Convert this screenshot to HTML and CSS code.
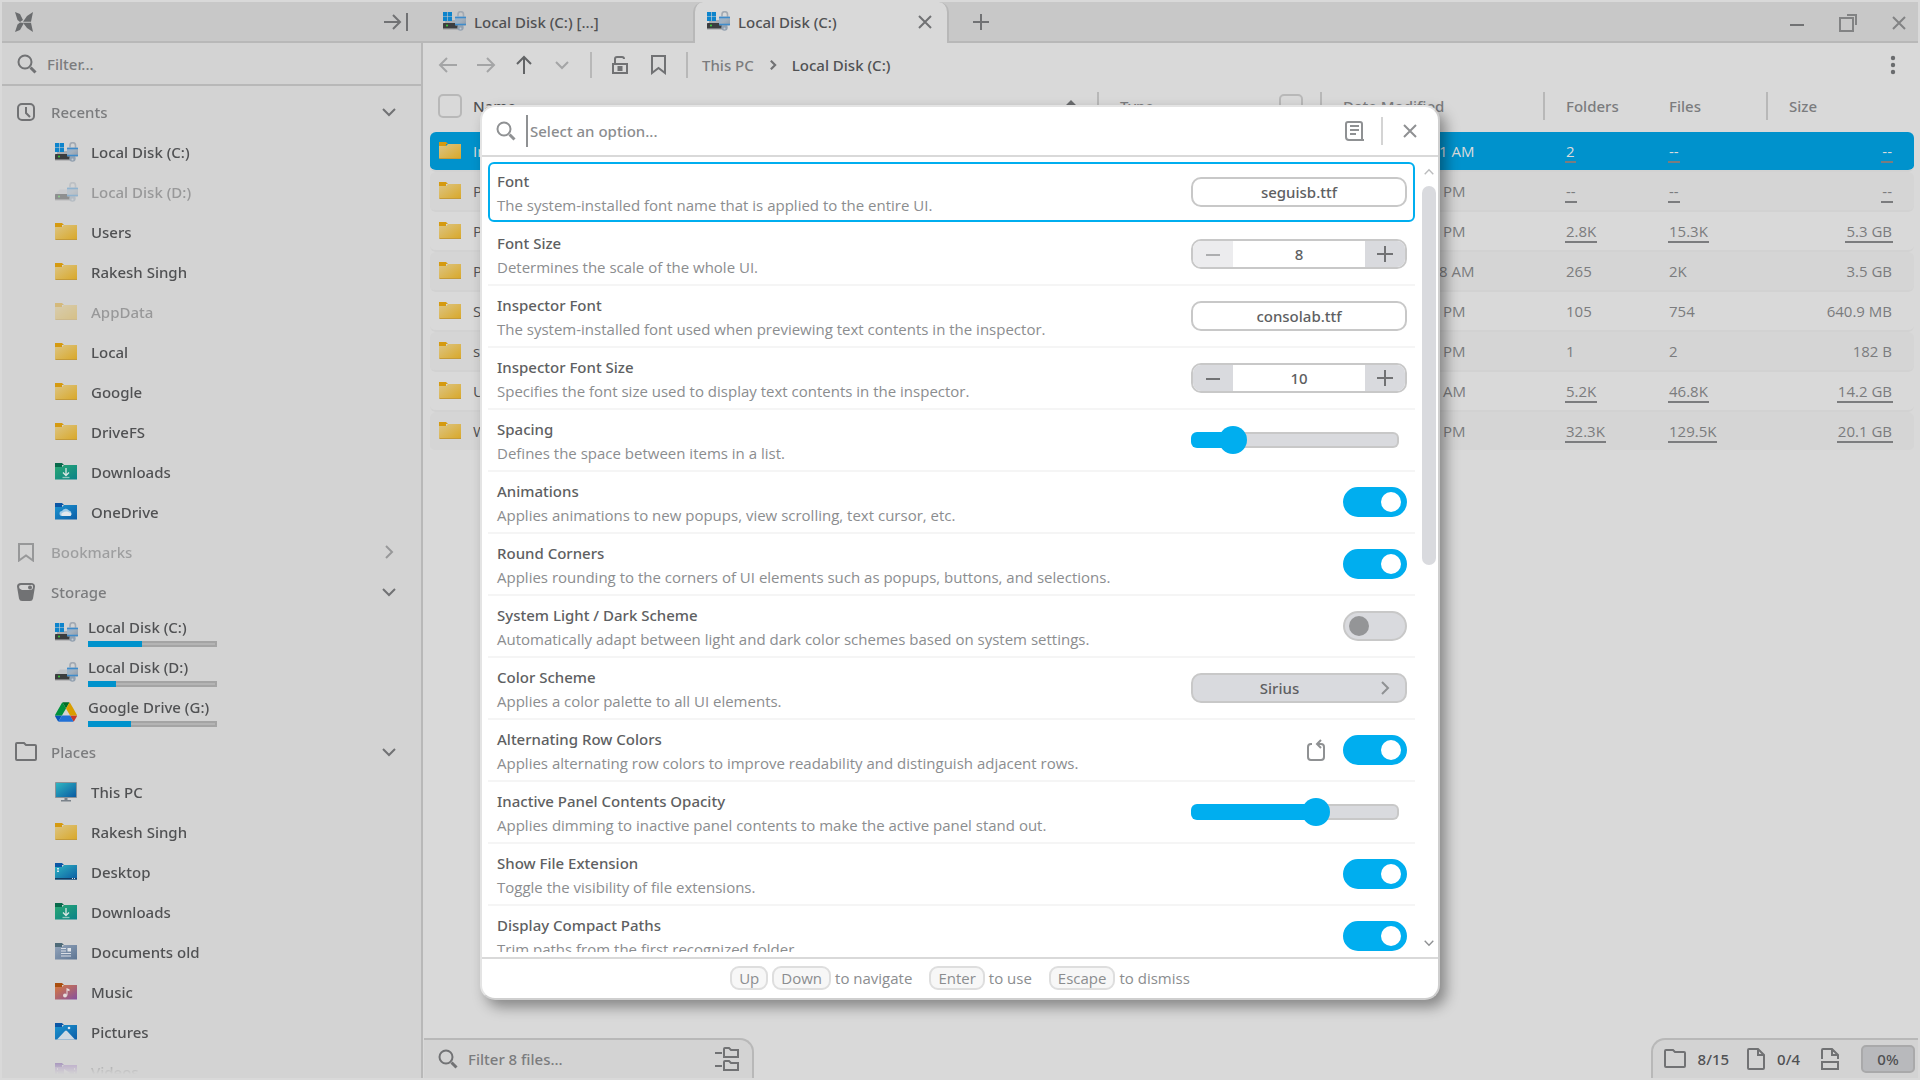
FILE: index.html
```html
<!DOCTYPE html>
<html lang="en">
<head>
<meta charset="utf-8">
<title>Local Disk (C:)</title>
<link rel="stylesheet" href="styles.css">
</head>
<body>
<svg class="sprite" aria-hidden="true">
  <defs>
    <linearGradient id="g-yellow" x1="0" y1="0" x2="1" y2="1"><stop offset="0" stop-color="#dcc585"/><stop offset="1" stop-color="#d9a829"/></linearGradient>
    <linearGradient id="g-green" x1="0" y1="0" x2="1" y2="1"><stop offset="0" stop-color="#2aa873"/><stop offset="1" stop-color="#0a8289"/></linearGradient>
    <linearGradient id="g-blue" x1="0" y1="0" x2="1" y2="1"><stop offset="0" stop-color="#1c94cf"/><stop offset="1" stop-color="#0c5ea8"/></linearGradient>
    <linearGradient id="g-teal" x1="0" y1="0" x2="1" y2="1"><stop offset="0" stop-color="#2fb6c2"/><stop offset="1" stop-color="#0a5aa2"/></linearGradient>
    <linearGradient id="g-slate" x1="0" y1="0" x2="1" y2="1"><stop offset="0" stop-color="#94a5bb"/><stop offset="1" stop-color="#5d7593"/></linearGradient>
    <linearGradient id="g-music" x1="0" y1="0" x2="1" y2="1"><stop offset="0" stop-color="#d97a3c"/><stop offset="1" stop-color="#8550a0"/></linearGradient>
    <linearGradient id="g-lock" x1="0" y1="0" x2="1" y2="1"><stop offset="0" stop-color="#8fb4d6"/><stop offset=".5" stop-color="#a3b0bd"/><stop offset="1" stop-color="#8c9aab"/></linearGradient>
  </defs>
  <symbol id="i-lockpart" viewBox="0 0 24 21">
    <path d="M15 5.500V3.500a2.500 2.500 0 0 1 5.500 0V6" fill="none" stroke="#a3aab3" stroke-width="1.600"/>
    <circle cx="17.500" cy="16.500" r="3.200" fill="#93a1b0"/><circle cx="17.500" cy="17.500" r="1" fill="#c3cad2"/>
    <rect x="12" y="5.500" width="11" height="9" rx="1" fill="url(#g-lock)"/>
    <path d="M12 6.500h11M12 13.500h11" stroke="#3f8ccb" stroke-width="1.400"/>
  </symbol>
  <symbol id="i-drive" viewBox="0 0 24 21">
    <path d="M5 7.500h12l4 4.500H0z" fill="#bfc2c7"/>
    <rect x="0" y="12" width="20" height="5.500" rx=".6" fill="#3b3d3f"/><rect x="0" y="17" width="20" height="1.300" fill="#7a7c7e"/>
    <circle cx="4" cy="14.500" r="1" fill="#3bd23b"/>
    <use href="#i-lockpart" width="24" height="21"/>
  </symbol>
  <symbol id="i-windrive" viewBox="0 0 24 21">
    <rect x="0" y="12" width="20" height="5.500" rx=".6" fill="#3b3d3f"/><rect x="0" y="17" width="20" height="1.300" fill="#7a7c7e"/>
    <path d="M9.500 9h9v3H2v-2z" fill="#a9acb0"/>
    <circle cx="4" cy="14.500" r="1" fill="#3bd23b"/>
    <path d="M0 1h4.200v4.200H0zM4.800 1H9v4.200H4.800zM0 5.800h4.200V10H0zM4.800 5.800H9V10H4.800z" fill="#0d84cc"/>
    <use href="#i-lockpart" width="24" height="21"/>
  </symbol>
  <symbol id="i-folder" viewBox="0 0 22 18">
    <path d="M0 0h7l2 2h-2v4H0z" fill="#d59a10"/><path d="M0 4h7l2-2h13v14.500H0z" fill="url(#g-yellow)"/><path d="M0 16h22v1H1z" fill="#c39a3a"/>
  </symbol>
  <symbol id="i-downloads" viewBox="0 0 22 18">
    <path d="M0 0h7l2 2h-2v4H0z" fill="#07694b"/><path d="M0 4h7l2-2h13v14.500H0z" fill="url(#g-green)"/>
    <path d="M11 5v7M8 9.500l3 3 3-3" fill="none" stroke="#dce8e4" stroke-width="1.300"/><path d="M7.500 14.500h7" stroke="#8fc7bb" stroke-width="1.300"/>
  </symbol>
  <symbol id="i-onedrive" viewBox="0 0 22 18">
    <path d="M0 0h7l2 2h-2v4H0z" fill="#0a56a5"/><path d="M0 4h7l2-2h13v14.500H0z" fill="url(#g-blue)"/>
    <path d="M7 13a2.500 2.500 0 0 1 0-5 4 4 0 0 1 7-.5 3 3 0 0 1 1 5.500z" fill="#9ecbe8"/><path d="M7 13a2 2 0 0 1 1-3.500c2-1.500 5-1 6 0 2 0 3.500 1.500 1.500 3.500z" fill="#e3e8ec"/>
  </symbol>
  <symbol id="i-desktop" viewBox="0 0 22 18">
    <path d="M0 0h7l2 2h-2v4H0z" fill="#0a56a5"/><path d="M0 4h7l2-2h13v14.500H0z" fill="url(#g-teal)"/>
    <path d="M0 15h22v1.500H0z" fill="#123a62"/><path d="M2 5h2v1.500H2zM2 7.500h2V9H2zM17 15h1v1h-1zM19 15h1v1h-1z" fill="#d6e6ee"/>
  </symbol>
  <symbol id="i-documents" viewBox="0 0 22 18">
    <path d="M0 0h7l2 2h-2v4H0z" fill="#4e6a78"/><path d="M0 4h7l2-2h13v14.500H0z" fill="url(#g-slate)"/>
    <path d="M6 5.500h5M6 8h5M6 10.500h10M6 13h10" stroke="#d9dee5" stroke-width="1.200"/><path d="M12.500 5h3.500v3.500h-3.500z" fill="#e2e6ea"/>
  </symbol>
  <symbol id="i-music" viewBox="0 0 22 18">
    <path d="M0 0h7l2 2h-2v4H0z" fill="#a94e0e"/><path d="M0 4h7l2-2h13v14.500H0z" fill="url(#g-music)"/>
    <circle cx="10" cy="12.500" r="2" fill="#e6dcdc"/><path d="M11.500 12.500V5l3 1.200v2l-2-.8v5z" fill="#e6dcdc"/>
  </symbol>
  <symbol id="i-pictures" viewBox="0 0 22 18">
    <path d="M0 0h7l2 2h-2v4H0z" fill="#0a56a5"/><path d="M0 4h7l2-2h13v14.500H0z" fill="url(#g-blue)"/>
    <path d="M2 16.500 10 8q1-1 2 0l8 8.500z" fill="#cfdae3"/><circle cx="14" cy="5" r="1.300" fill="#dce6ee"/>
  </symbol>
  <symbol id="i-videos" viewBox="0 0 22 18">
    <path d="M0 0h7l2 2h-2v4H0z" fill="#6a3fa0"/><path d="M0 4h7l2-2h13v14.500H0z" fill="#9a70c0"/>
    <path d="M9 6l6 4-6 4z" fill="#e6dcee"/><path d="M2 5h1v2H2zM2 9h1v2H2zM19 5h1v2h-1zM19 9h1v2h-1z" fill="#e6dcee"/>
  </symbol>
  <symbol id="i-pc" viewBox="0 0 22 20">
    <rect x="0" y="0" width="22" height="16" rx=".8" fill="#8b9298"/><rect x="1" y="1" width="20" height="14" fill="url(#g-teal)"/>
    <path d="M9.500 16h3v2h-3zM6 18h10v1.500H6z" fill="#7a828a"/>
  </symbol>
  <symbol id="i-gdrive" viewBox="0 0 87.300 78">
    <path d="m6.600 66.850 3.850 6.650c.8 1.400 1.950 2.500 3.300 3.300l13.750-23.800h-27.500c0 1.550.4 3.100 1.200 4.500z" fill="#0a57b8"/>
    <path d="m43.650 25-13.750-23.800c-1.350.8-2.500 1.900-3.300 3.300l-25.400 44a9.060 9.060 0 0 0-1.200 4.500h27.500z" fill="#00923c"/>
    <path d="m73.550 76.800c1.350-.8 2.500-1.900 3.300-3.300l1.600-2.750 7.650-13.250c.8-1.400 1.200-2.950 1.200-4.500h-27.500l5.850 11.500z" fill="#c7392d"/>
    <path d="m43.650 25 13.750-23.800c-1.350-.8-2.900-1.200-4.500-1.200h-18.500c-1.600 0-3.150.45-4.500 1.200z" fill="#006f26"/>
    <path d="m59.800 53h-32.300l-13.750 23.800c1.350.8 2.900 1.200 4.500 1.200h50.800c1.600 0 3.150-.45 4.500-1.200z" fill="#2070d6"/>
    <path d="m73.400 26.500-12.700-22c-.8-1.400-1.950-2.500-3.300-3.300l-13.750 23.800 16.150 28h27.450c0-1.550-.4-3.100-1.200-4.500z" fill="#d99e00"/>
  </symbol>
  <symbol id="i-search" viewBox="0 0 20 20"><circle cx="8" cy="8" r="6.500"/><path d="M13.500 13.500l5 5" stroke-width="3"/></symbol>
  <symbol id="i-down" viewBox="0 0 14 14"><path d="M1 4l6 6 6-6"/></symbol>
  <symbol id="i-up" viewBox="0 0 14 14"><path d="M1 10l6-6 6 6"/></symbol>
  <symbol id="i-right" viewBox="0 0 14 14"><path d="M4 1l6 6-6 6"/></symbol>
  <symbol id="i-close" viewBox="0 0 14 14"><path d="M1 1l12 12M13 1L1 13"/></symbol>
  <symbol id="i-plus" viewBox="0 0 16 16"><path d="M8 0v16M0 8h16"/></symbol>
  <symbol id="i-minus" viewBox="0 0 14 14"><path d="M0 8h14"/></symbol>
  <symbol id="i-folderline" viewBox="0 0 22 20"><path d="M1 2q0-1 1-1h7l2 2h9q1 0 1 1v13q0 1-1 1H2q-1 0-1-1z"/></symbol>
</svg>

<div class="window">
  <header class="titlebar">
    <div class="brand">
      <svg width="18" height="20" viewBox="0 0 18 20" fill="#6a6c6e"><path d="M0 0l5 2 3 6-3 2-2.500-2zM0 20l5-2 4-7-4-.500-2.500 2zM18 0l-6 4-4 5.700h8zM18 20l-6-4-4-5.300h8z"/></svg>
      <button class="icon-btn" aria-label="Collapse sidebar"><svg class="ln" width="26" height="20" viewBox="0 0 26 20"><path d="M1 10h16M10 3l7 7-7 7M24 1v18"/></svg></button>
    </div>
    <nav class="tabs">
      <a class="tab" href="#"><svg width="24" height="21"><use href="#i-windrive"/></svg>Local Disk (C:) [...]</a>
      <div class="tab tab-active"><a href="#"><svg width="24" height="21"><use href="#i-windrive"/></svg>Local Disk (C:)</a><button class="icon-btn" aria-label="Close tab"><svg class="ln" width="14" height="14"><use href="#i-close"/></svg></button></div>
      <button class="icon-btn tab-new" aria-label="New tab"><svg class="ln" width="16" height="16"><use href="#i-plus"/></svg></button>
    </nav>
    <div class="win-controls">
      <button class="icon-btn" aria-label="Minimize"><svg class="ln" width="14" height="14" viewBox="0 0 14 14"><path d="M0 9h14"/></svg></button>
      <button class="icon-btn" aria-label="Restore"><svg class="ln thin" width="18" height="18" viewBox="0 0 18 18"><path d="M1 4h13v13H1zM8 1h9v10"/></svg></button>
      <button class="icon-btn" aria-label="Close"><svg class="ln thin" width="14" height="14"><use href="#i-close"/></svg></button>
    </div>
  </header>

  <aside class="sidebar">
    <label class="side-filter"><svg class="ln" width="20" height="20"><use href="#i-search"/></svg><input type="text" placeholder="Filter..." aria-label="Filter"></label>
    <div class="side-list">
      <button class="section"><svg class="ln" width="22" height="20" viewBox="0 0 22 20"><rect x="3" y="2" width="16" height="16" rx="4"/><path d="M11 5v6l4 4"/></svg><span>Recents</span><svg class="ln" width="14" height="14"><use href="#i-down"/></svg></button>
      <a class="item" href="#"><svg width="24" height="21"><use href="#i-windrive"/></svg>Local Disk (C:)</a>
      <a class="item faded" href="#"><svg width="24" height="21"><use href="#i-drive"/></svg>Local Disk (D:)</a>
      <a class="item" href="#"><svg width="22" height="18"><use href="#i-folder"/></svg>Users</a>
      <a class="item" href="#"><svg width="22" height="18"><use href="#i-folder"/></svg>Rakesh Singh</a>
      <a class="item faded" href="#"><svg width="22" height="18"><use href="#i-folder"/></svg>AppData</a>
      <a class="item" href="#"><svg width="22" height="18"><use href="#i-folder"/></svg>Local</a>
      <a class="item" href="#"><svg width="22" height="18"><use href="#i-folder"/></svg>Google</a>
      <a class="item" href="#"><svg width="22" height="18"><use href="#i-folder"/></svg>DriveFS</a>
      <a class="item" href="#"><svg width="22" height="18"><use href="#i-downloads"/></svg>Downloads</a>
      <a class="item" href="#"><svg width="22" height="18"><use href="#i-onedrive"/></svg>OneDrive</a>
      <button class="section faded-section"><svg class="ln" width="22" height="20" viewBox="0 0 22 20"><path d="M4 2h14v16.500l-7-5-7 5z"/></svg><span>Bookmarks</span><svg class="ln" width="14" height="14"><use href="#i-right"/></svg></button>
      <button class="section"><svg width="22" height="20" viewBox="0 0 22 20"><path fill="#717274" fill-rule="evenodd" d="M6 1h10q4 0 4 3.500l-2 12Q17.500 19 15 19H7q-2.500 0-3-2.500L2 4.500Q2 1 6 1zM6 3Q4 3 4 5t3 3h8q3 0 3-3t-2-2z"/><circle cx="15" cy="5.500" r="2" fill="#717274"/></svg><span>Storage</span><svg class="ln" width="14" height="14"><use href="#i-down"/></svg></button>
      <a class="item disk" href="#"><svg width="24" height="21"><use href="#i-windrive"/></svg><span class="disk-info">Local Disk (C:)<span class="usage"><span style="width:42%"></span></span></span></a>
      <a class="item disk" href="#"><svg width="24" height="21"><use href="#i-drive"/></svg><span class="disk-info">Local Disk (D:)<span class="usage"><span style="width:22%"></span></span></span></a>
      <a class="item disk" href="#"><svg width="22" height="20"><use href="#i-gdrive"/></svg><span class="disk-info">Google Drive (G:)<span class="usage"><span style="width:33%"></span></span></span></a>
      <button class="section"><svg class="ln" width="22" height="20"><use href="#i-folderline"/></svg><span>Places</span><svg class="ln" width="14" height="14"><use href="#i-down"/></svg></button>
      <a class="item" href="#"><svg width="22" height="20"><use href="#i-pc"/></svg>This PC</a>
      <a class="item" href="#"><svg width="22" height="18"><use href="#i-folder"/></svg>Rakesh Singh</a>
      <a class="item" href="#"><svg width="22" height="18"><use href="#i-desktop"/></svg>Desktop</a>
      <a class="item" href="#"><svg width="22" height="18"><use href="#i-downloads"/></svg>Downloads</a>
      <a class="item" href="#"><svg width="22" height="18"><use href="#i-documents"/></svg>Documents old</a>
      <a class="item" href="#"><svg width="22" height="18"><use href="#i-music"/></svg>Music</a>
      <a class="item" href="#"><svg width="22" height="18"><use href="#i-pictures"/></svg>Pictures</a>
      <a class="item" href="#"><svg width="22" height="18"><use href="#i-videos"/></svg>Videos</a>
    </div>
  </aside>

  <main class="panel">
    <div class="toolbar">
      <button class="icon-btn dim" aria-label="Back"><svg class="ln" width="20" height="20" viewBox="0 0 20 20"><path d="M19 10H2M9 3l-7 7 7 7"/></svg></button>
      <button class="icon-btn dim" aria-label="Forward"><svg class="ln" width="20" height="20" viewBox="0 0 20 20"><path d="M1 10h17M11 3l7 7-7 7"/></svg></button>
      <button class="icon-btn strong" aria-label="Up"><svg class="ln" width="20" height="20" viewBox="0 0 20 20"><path d="M10 19V2M3 9l7-7 7 7"/></svg></button>
      <button class="icon-btn dim" aria-label="History"><svg class="ln" width="14" height="14"><use href="#i-down"/></svg></button>
      <span class="bar"></span>
      <button class="icon-btn" aria-label="Lock"><svg class="ln" width="18" height="20" viewBox="0 0 18 20"><path d="M2 9h14v9H2zM4 9V4q0-2 2-2h5q2 0 2 2"/><rect x="7.500" y="12" width="3" height="3" fill="#717274"/></svg></button>
      <button class="icon-btn" aria-label="Bookmark"><svg class="ln" width="20" height="20" viewBox="0 0 20 20"><path d="M4 1h13v17l-6.500-5-6.500 5z"/></svg></button>
      <span class="bar"></span>
      <nav class="crumbs"><a href="#">This PC</a><svg class="ln" width="10" height="10" viewBox="0 0 14 14"><path d="M4 1l6 6-6 6" stroke-width="3"/></svg><a class="here" href="#">Local Disk (C:)</a></nav>
      <button class="icon-btn more" aria-label="More"><svg width="6" height="20" viewBox="0 0 6 20" fill="#6a6c6e"><circle cx="3" cy="3" r="2.200"/><circle cx="3" cy="10" r="2.200"/><circle cx="3" cy="17" r="2.200"/></svg></button>
    </div>

    <table class="files">
      <colgroup><col><col class="c-type"><col class="c-date"><col class="c-folders"><col class="c-files"><col class="c-size"></colgroup>
      <thead><tr>
        <th><div class="head head-name"><input type="checkbox" aria-label="Select all">Name<svg class="sort" width="12" height="12" viewBox="0 0 12 12"><path d="M6 0l6 6H8v6H4V6H0z" fill="#6a6c6e"/></svg></div></th>
        <th><div class="head ruled">Type<input type="checkbox" aria-label="Group by type"></div></th>
        <th><div class="head ruled">Date Modified</div></th>
        <th><div class="head ruled">Folders</div></th>
        <th><div class="head">Files</div></th>
        <th><div class="head ruled">Size</div></th>
      </tr></thead>
      <tbody>
        <tr class="selected"><td><span class="name"><svg width="22" height="18"><use href="#i-folder"/></svg>Intel</span></td><td></td><td>4/1/2024 11:51 AM</td><td><a href="#">2</a></td><td><a href="#">--</a></td><td><a href="#">--</a></td></tr>
        <tr><td><span class="name"><svg width="22" height="18"><use href="#i-folder"/></svg>PerfLogs</span></td><td></td><td>4/1/2024 1:26 PM</td><td><a href="#">--</a></td><td><a href="#">--</a></td><td><a href="#">--</a></td></tr>
        <tr><td><span class="name"><svg width="22" height="18"><use href="#i-folder"/></svg>Program Files</span></td><td></td><td>5/6/2025 4:12 PM</td><td><a href="#">2.8K</a></td><td><a href="#">15.3K</a></td><td><a href="#">5.3 GB</a></td></tr>
        <tr><td><span class="name"><svg width="22" height="18"><use href="#i-folder"/></svg>Program Files (x86)</span></td><td></td><td>5/5/2025 10:18 AM</td><td>265</td><td>2K</td><td>3.5 GB</td></tr>
        <tr><td><span class="name"><svg width="22" height="18"><use href="#i-folder"/></svg>Symbols</span></td><td></td><td>5/2/2025 3:11 PM</td><td>105</td><td>754</td><td>640.9 MB</td></tr>
        <tr><td><span class="name"><svg width="22" height="18"><use href="#i-folder"/></svg>system</span></td><td></td><td>3/1/2025 5:11 PM</td><td>1</td><td>2</td><td>182 B</td></tr>
        <tr><td><span class="name"><svg width="22" height="18"><use href="#i-folder"/></svg>Users</span></td><td></td><td>3/1/2025 9:40 AM</td><td><a href="#">5.2K</a></td><td><a href="#">46.8K</a></td><td><a href="#">14.2 GB</a></td></tr>
        <tr><td><span class="name"><svg width="22" height="18"><use href="#i-folder"/></svg>Windows</span></td><td></td><td>5/6/2025 1:15 PM</td><td><a href="#">32.3K</a></td><td><a href="#">129.5K</a></td><td><a href="#">20.1 GB</a></td></tr>
      </tbody>
    </table>

    <footer class="status">
      <label class="file-filter"><svg class="ln" width="20" height="20"><use href="#i-search"/></svg><input type="text" placeholder="Filter 8 files..." aria-label="Filter files"><svg class="ln" width="24" height="26" viewBox="0 0 24 26"><path d="M0 7h7M0 20h7M9 3q0-1 1-1h4l2 2h7v7H9zM9 16q0-1 1-1h4l2 2h7v7H9z"/></svg></label>
      <div class="counts">
        <svg class="ln" width="22" height="20"><use href="#i-folderline"/></svg><span>8/15</span>
        <svg class="ln" width="18" height="22" viewBox="0 0 18 22"><path d="M1 2q0-1 1-1h9l6 6v13q0 1-1 1H2q-1 0-1-1zM11 1v6h6"/></svg><span>0/4</span>
        <svg class="ln" width="18" height="22" viewBox="0 0 18 22"><path d="M1 11V2q0-1 1-1h9l6 6v4M11 1v6h6M1 14h16v7H1z"/></svg>
        <button class="percent">0%</button>
      </div>
    </footer>
  </main>

  <div class="overlay">
    <section class="dialog" role="dialog" aria-label="Options">
      <header class="dialog-head">
        <svg class="ln" width="20" height="20"><use href="#i-search"/></svg>
        <span class="caret"></span>
        <input type="text" placeholder="Select an option..." aria-label="Select an option">
        <button class="icon-btn" aria-label="Log"><svg class="ln" width="20" height="20" viewBox="0 0 20 20"><path d="M17 18V3q0-2-2-2H3Q1 1 1 3v13q0 3 3 3h15M5 5h9M5 9h9M5 13h6"/></svg></button>
        <span class="bar"></span>
        <button class="icon-btn" aria-label="Dismiss"><svg class="ln" width="14" height="14"><use href="#i-close"/></svg></button>
      </header>
      <div class="dialog-body">
        <ul class="options">
          <li class="option current"><div><h3>Font</h3><p>The system-installed font name that is applied to the entire UI.</p></div><button class="field">seguisb.ttf</button></li>
          <li class="option"><div><h3><label for="fs">Font Size</label></h3><p>Determines the scale of the whole UI.</p></div><div class="stepper"><button disabled aria-label="Decrease"><svg class="ln" width="14" height="14"><use href="#i-minus"/></svg></button><input id="fs" type="text" value="8"><button aria-label="Increase"><svg class="ln" width="16" height="16"><use href="#i-plus"/></svg></button></div></li>
          <li class="option"><div><h3>Inspector Font</h3><p>The system-installed font used when previewing text contents in the inspector.</p></div><button class="field">consolab.ttf</button></li>
          <li class="option"><div><h3><label for="ifs">Inspector Font Size</label></h3><p>Specifies the font size used to display text contents in the inspector.</p></div><div class="stepper"><button aria-label="Decrease"><svg class="ln" width="14" height="14"><use href="#i-minus"/></svg></button><input id="ifs" type="text" value="10"><button aria-label="Increase"><svg class="ln" width="16" height="16"><use href="#i-plus"/></svg></button></div></li>
          <li class="option"><div><h3><label for="sp">Spacing</label></h3><p>Defines the space between items in a list.</p></div><input id="sp" class="slider" type="range" value="15" style="--fill:20%"></li>
          <li class="option"><div><h3><label for="an">Animations</label></h3><p>Applies animations to new popups, view scrolling, text cursor, etc.</p></div><input id="an" class="switch" type="checkbox" checked></li>
          <li class="option"><div><h3><label for="rc">Round Corners</label></h3><p>Applies rounding to the corners of UI elements such as popups, buttons, and selections.</p></div><input id="rc" class="switch" type="checkbox" checked></li>
          <li class="option"><div><h3><label for="ld">System Light / Dark Scheme</label></h3><p>Automatically adapt between light and dark color schemes based on system settings.</p></div><input id="ld" class="switch" type="checkbox"></li>
          <li class="option"><div><h3>Color Scheme</h3><p>Applies a color palette to all UI elements.</p></div><button class="field picker"><span>Sirius</span><svg class="ln" width="14" height="14"><use href="#i-right"/></svg></button></li>
          <li class="option"><div><h3><label for="ar">Alternating Row Colors</label></h3><p>Applies alternating row colors to improve readability and distinguish adjacent rows.</p></div><button class="icon-btn reset" aria-label="Reset"><svg class="ln" width="20" height="24" viewBox="0 0 20 24"><path d="M6 6H5Q2 6 2 9v10q0 3 3 3h10q3 0 3-3V9q0-3-3-3h-4M15 2l-4 4 4 4"/></svg></button><input id="ar" class="switch" type="checkbox" checked></li>
          <li class="option"><div><h3><label for="ip">Inactive Panel Contents Opacity</label></h3><p>Applies dimming to inactive panel contents to make the active panel stand out.</p></div><input id="ip" class="slider" type="range" value="62" style="--fill:60%"></li>
          <li class="option"><div><h3><label for="fe">Show File Extension</label></h3><p>Toggle the visibility of file extensions.</p></div><input id="fe" class="switch" type="checkbox" checked></li>
          <li class="option"><div><h3><label for="cp">Display Compact Paths</label></h3><p>Trim paths from the first recognized folder.</p></div><input id="cp" class="switch" type="checkbox" checked></li>
        </ul>
        <div class="scroll"><svg class="ln faint" width="10" height="10"><use href="#i-up"/></svg><div class="track"><div class="thumb"></div></div><svg class="ln" width="10" height="10"><use href="#i-down"/></svg></div>
      </div>
      <footer class="dialog-foot">
        <span><kbd>Up</kbd><kbd>Down</kbd>to navigate</span><span><kbd>Enter</kbd>to use</span><span><kbd>Escape</kbd>to dismiss</span>
      </footer>
    </section>
  </div>
</div>
</body>
</html>
```
FILE: styles.css
```css
:root {
  --bg: #d9d9d9;
  --side: #d3d3d3;
  --rule: #b8b8b8;
  --text: #505153;
  --muted: #7b7c7e;
  --icon: #717274;
  --accent: #00aeef;
}
* { box-sizing: border-box; }
body {
  margin: 0;
  background: var(--bg);
  color: var(--text);
  font: 500 15px/20px "Noto Sans", "Open Sans", sans-serif;
}
a { color: inherit; text-decoration: none; }
button, input { font: inherit; color: inherit; margin: 0; }
button { border: 0; background: none; padding: 0; }
input[type="text"] { border: 0; background: none; padding: 0; outline: 0; min-width: 0; }
::placeholder { color: var(--muted); opacity: 1; }
svg { flex: none; display: block; }
.sprite { position: absolute; width: 0; height: 0; }
.ln { fill: none; stroke: var(--icon); stroke-width: 2; }
.thin { opacity: .8; }
.icon-btn { display: flex; align-items: center; justify-content: center; }
.bar { width: 2px; height: 26px; background: var(--rule); }

.window {
  height: 100vh;
  padding: 2px;
  display: grid;
  grid-template: 41px 1fr / 421px 1fr;
  overflow: hidden;
  position: relative;
}

/* title bar */
.titlebar {
  grid-column: 1 / -1;
  display: flex;
  align-items: stretch;
  background: #c8c8c8;
  box-shadow: inset 0 -2px var(--rule);
}
.brand { width: 421px; padding: 0 14px 2px 13px; display: flex; align-items: center; justify-content: space-between; }
.tabs { flex: 1; display: flex; }
.tab { display: flex; align-items: center; gap: 7px; width: 270px; padding: 0 0 2px 20px; }
.tab a { display: flex; align-items: center; gap: 7px; }
.tab-active {
  width: 256px;
  padding: 0 15px 2px 12px;
  justify-content: space-between;
  background: var(--bg);
  border: 2px solid var(--rule);
  border-width: 0 2px;
  border-radius: 10px 10px 0 0;
}
.tab-new { width: 64px; padding-bottom: 2px; }
.win-controls { display: flex; align-items: center; gap: 35px; padding-right: 12px; }

/* sidebar */
.sidebar {
  background: var(--side);
  border-right: 2px solid var(--rule);
  min-height: 0;
  display: flex;
  flex-direction: column;
}
.side-filter { display: flex; align-items: center; gap: 10px; height: 43px; flex: none; padding-left: 15px; border-bottom: 2px solid var(--rule); }
.side-list {
  flex: 1;
  min-height: 0;
  overflow: hidden;
  padding-top: 6px;
  -webkit-mask-image: linear-gradient(#000 calc(100% - 32px), transparent calc(100% - 4px));
  mask-image: linear-gradient(#000 calc(100% - 32px), transparent calc(100% - 4px));
}
.section { display: flex; align-items: center; gap: 14px; width: 100%; height: 40px; padding: 0 25px 0 13px; text-align: left; color: var(--muted); }
.section span { flex: 1; }
.item { display: flex; align-items: center; height: 40px; padding-left: 53px; }
.item svg { margin-right: 14px; }
.item svg[width="24"] { margin-right: 12px; }
.faded { opacity: .45; }
.faded-section { opacity: .6; }
.disk .disk-info { display: flex; flex-direction: column; gap: 4px; margin-left: -3px; }
.usage { width: 129px; height: 6px; background: #b4b4b4; box-shadow: inset 0 0 0 2px #a4a4a4; }
.usage span { display: block; height: 6px; background: #0092cc; }

/* file panel */
.panel { display: flex; flex-direction: column; min-width: 0; min-height: 0; }
.toolbar { display: flex; align-items: center; height: 43px; padding: 0 22px 0 15px; gap: 18px; }
.toolbar .icon-btn { min-width: 20px; }
.toolbar .strong { --icon: #626466; }
.toolbar .more { min-width: 6px; margin-left: auto; }
.dim { opacity: .5; }
.crumbs { display: flex; align-items: center; gap: 14px; margin-left: -4px; color: var(--muted); }
.crumbs .here { color: var(--text); }

.files { margin: 0 4px 0 7px; border-collapse: separate; border-spacing: 0; table-layout: fixed; color: var(--muted); }
.c-type, .c-date { width: 223px; }
.c-folders { width: 103px; }
.c-files { width: 120px; }
.c-size { width: 148px; }
.files th { padding: 6px 0 12px; height: 46px; font-weight: 500; text-align: left; }
.head { display: flex; align-items: center; height: 28px; padding-left: 23px; }
.ruled { border-left: 2px solid var(--rule); padding-left: 21px; }
.ruled input { margin-left: auto; margin-right: 17px; }
.head-name { padding: 0 20px 0 8px; gap: 11px; color: var(--text); }
.sort { margin-left: auto; }
.head input { appearance: none; width: 24px; height: 24px; border: 2px solid var(--rule); border-radius: 5px; }
.files td { height: 40px; padding: 0 22px 0 23px; border-bottom: 2px solid #d2d2d2; background-clip: padding-box; font-family: "Open Sans", sans-serif; }
.files td:first-child { padding-left: 9px; color: var(--text); border-radius: 6px 0 0 6px; }
.files td:last-child { text-align: right; border-radius: 0 6px 6px 0; }
.files tbody tr:nth-child(even) td { background-color: #d5d5d5; }
.files tbody .selected td { background-color: #0092cc; color: #dcdcdc; }
.files tr:last-child td { border-color: transparent; }
.files td a { display: inline-block; height: 22px; margin: 2px -1px 0; padding: 0 1px; border-bottom: 2px solid var(--muted); }
.name { display: flex; align-items: center; gap: 12px; }

.status { margin-top: auto; display: flex; justify-content: space-between; padding-left: 1px; }
.file-filter, .counts { height: 40px; display: flex; align-items: center; background: var(--side); border: 2px solid var(--rule); border-bottom: 0; }
.file-filter { width: 330px; border-left: 0; border-radius: 0 14px 0 0; padding: 0 13px 0 14px; gap: 10px; }
.file-filter input { flex: 1; }
.counts { border-right: 0; border-radius: 14px 0 0 0; padding: 0 3px 0 11px; }
.counts span { margin: 0 18px 0 12px; }
.counts span:nth-of-type(2) { margin-right: 21px; }
.counts .percent { width: 54px; height: 28px; margin-left: 22px; border-radius: 5px; background: #b8b9bc; border: 2px solid #a9a9aa; }

/* options dialog */
.overlay { position: absolute; inset: 0; display: flex; justify-content: center; padding: 105px 0 80px; }
.dialog {
  width: 50%;
  display: flex;
  flex-direction: column;
  background: #fff;
  border: 2px solid #e4e4e4;
  border-right-color: #cfcfcf;
  border-bottom-color: #cfcfcf;
  border-radius: 15px;
  box-shadow: 6px 7px 14px rgba(0, 0, 0, .38);
  color: #5e5f62;
  --muted: #8b8d8f;
  --icon: #8f9193;
}
.dialog-head { display: flex; align-items: center; height: 50px; flex: none; padding: 0 21px 0 14px; border-bottom: 2px solid #d9d9d9; }
.dialog-head .caret { width: 2px; height: 32px; margin-left: 10px; background: #8f9193; }
.dialog-head input { flex: 1; margin-left: 2px; }
.dialog-head .bar { height: 28px; margin: 0 20px 0 16px; background: #d4d4d4; }
.dialog-body { flex: 1; min-height: 0; display: flex; padding: 5px 2px 5px 6px; }
.options { flex: 1; margin: 0; padding: 0; list-style: none; overflow: hidden; }
.option { display: flex; align-items: center; height: 62px; padding: 0 8px 0 9px; border-bottom: 2px solid #f5f5f5; }
.option > div:first-child { flex: 1; min-width: 0; padding-top: 2px; }
.option.current { height: 60px; margin-bottom: 2px; padding: 0 6px 0 7px; border: 2px solid var(--accent); border-radius: 6px; }
.option h3 { margin: 0; font: inherit; line-height: 24px; }
.option p { margin: 0; line-height: 24px; font-family: "Open Sans", sans-serif; font-weight: 400; color: var(--muted); }
.field { width: 216px; height: 30px; border: 2px solid #c8c8c8; border-radius: 10px; }
.picker { display: flex; align-items: center; padding: 0 13px 0 0; background: #d9dade; }
.picker span { flex: 1; padding-right: 12px; }
.stepper { display: flex; width: 216px; height: 30px; border: 2px solid #c8c8c8; border-radius: 10px; overflow: hidden; --icon: #717274; }
.stepper button { width: 40px; background: #d9dade; display: flex; align-items: center; justify-content: center; }
.stepper button:disabled { background: #ececee; --icon: #adaeb0; }
.stepper input { flex: 1; text-align: center; }
.slider {
  appearance: none;
  width: 208px;
  height: 16px;
  margin-right: 8px;
  border-radius: 6px;
  border: 2px solid transparent;
  background:
    linear-gradient(var(--accent), var(--accent)) 0 0 / var(--fill) 100% no-repeat border-box,
    linear-gradient(#d9dade, #d9dade) padding-box,
    linear-gradient(#c8c8c8, #c8c8c8) border-box;
}
.slider::-webkit-slider-thumb { appearance: none; width: 28px; height: 28px; border-radius: 50%; background: var(--accent); }
.switch { appearance: none; width: 64px; height: 30px; border-radius: 15px; border: 2px solid #c8c8c8; background: #d9dade; display: flex; align-items: center; padding: 0 4px; }
.switch::before { content: ""; width: 20px; height: 20px; border-radius: 50%; background: #949597; }
.switch:checked { background: var(--accent); border-color: var(--accent); justify-content: flex-end; }
.switch:checked::before { background: #fff; }
.reset { margin-right: 17px; }
.scroll { width: 14px; margin-left: 7px; display: flex; flex-direction: column; align-items: center; padding: 5px 0 4px; }
.scroll .faint { opacity: .6; }
.track { flex: 1; width: 14px; padding: 9px 0; }
.thumb { height: 51%; border-radius: 7px; background: #d9dade; }
.dialog-foot { display: flex; align-items: center; justify-content: center; gap: 17px; height: 41px; flex: none; padding-bottom: 2px; border-top: 2px solid #d9d9d9; color: var(--muted); font-family: "Open Sans", sans-serif; }
.dialog-foot span { display: flex; align-items: center; gap: 4px; }
kbd { font: inherit; line-height: 20px; padding: 0 7px; border: 2px solid #dedede; border-radius: 9px; background: #f7f7f7; }
```
